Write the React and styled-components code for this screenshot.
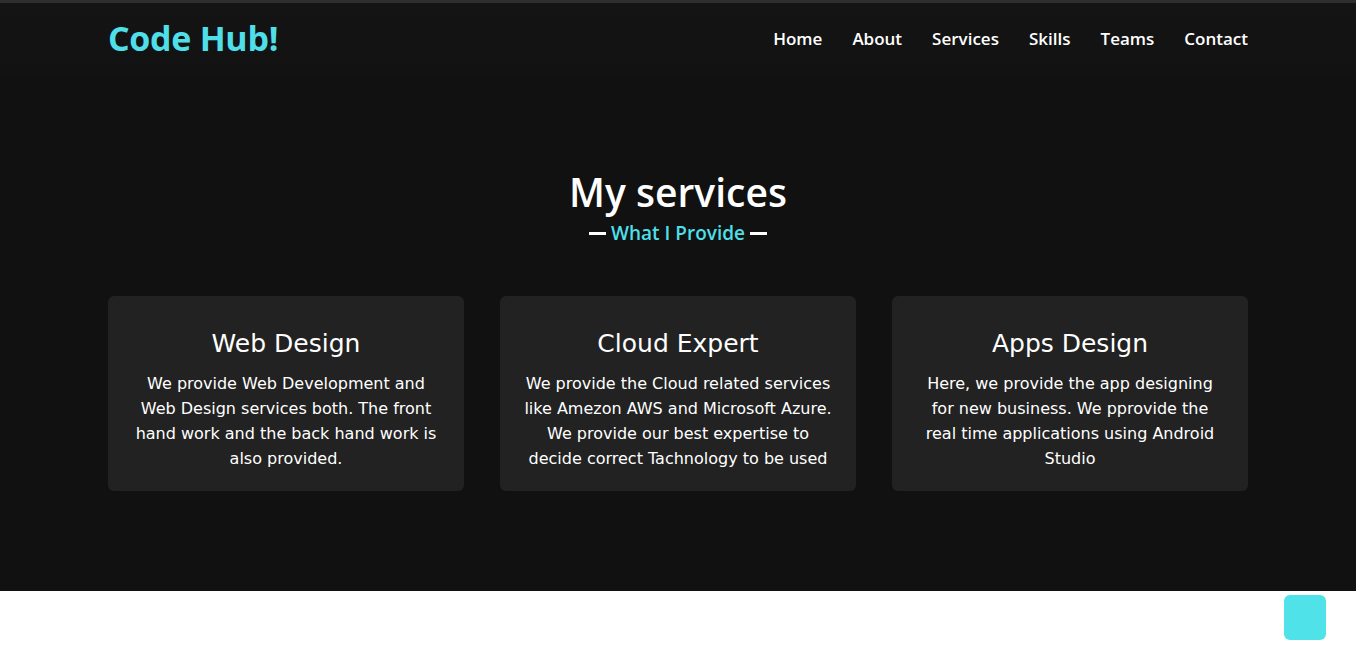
import React from 'react';
import styled, { createGlobalStyle } from 'styled-components';

const GlobalStyle = createGlobalStyle`
  * {
    margin: 0;
    padding: 0;
    box-sizing: border-box;
  }
  body {
    background: #fff;
    font-family: "Open Sans", sans-serif;
  }
`;

const TopLine = styled.div`
  height: 3px;
  background: #2e2e2e;
`;

const Navbar = styled.nav`
  height: 72px;
  background: linear-gradient(180deg, #151415 0%, #121212 100%);
`;

const Container = styled.div`
  max-width: 1140px;
  margin: 0 auto;
  height: 100%;
`;

const NavInner = styled(Container)`
  display: flex;
  align-items: center;
  justify-content: space-between;
`;

const Logo = styled.a`
  font-family: "Open Sans", sans-serif;
  font-size: 34px;
  font-weight: 700;
  color: #4fdfe9;
  letter-spacing: -0.3px;
  text-decoration: none;
  margin-top: -2px;
`;

const Menu = styled.ul`
  list-style: none;
  display: flex;
  gap: 30px;
  margin-top: -2px;
`;

const MenuLink = styled.a`
  font-family: "Open Sans", sans-serif;
  font-size: 17px;
  font-weight: 600;
  color: #fff;
  text-decoration: none;
`;

const Services = styled.section`
  background: #111111;
  padding: 94px 0 100px;
`;

const Title = styled.h2`
  font-family: "Open Sans", sans-serif;
  font-size: 39px;
  font-weight: 600;
  color: #fff;
  text-align: center;
  line-height: 46px;
`;

const Subtitle = styled.div`
  display: flex;
  justify-content: center;
  align-items: center;
  gap: 5px;
  margin-top: 6px;
  font-family: "Open Sans", sans-serif;
  font-size: 19px;
  font-weight: 600;
  color: #4fdfe9;
  line-height: 24px;
  &::before,
  &::after {
    content: "";
    width: 17px;
    height: 3px;
    background: #fff;
  }
`;

const Cards = styled(Container)`
  display: grid;
  grid-template-columns: repeat(3, 1fr);
  gap: 36px;
  margin-top: 51px;
`;

const Card = styled.div`
  background: #222222;
  border-radius: 6px;
  padding: 30px 20px 24px;
  text-align: center;
  height: 195px;
  color: #fff;
`;

const CardTitle = styled.h3`
  font-family: "DejaVu Sans", sans-serif;
  font-size: 25px;
  font-weight: 400;
  line-height: 36px;
  margin-bottom: 9px;
`;

const CardText = styled.p`
  font-family: "DejaVu Sans", sans-serif;
  font-size: 16px;
  line-height: 25px;
  padding: 0 ${p => p.$pad || 0}px;
`;

const Blank = styled.div`
  height: 76px;
  background: #fff;
`;

const ScrollTop = styled.button`
  position: fixed;
  right: 30px;
  bottom: 27px;
  width: 42px;
  height: 45px;
  border: none;
  border-radius: 6px;
  background: #4fe3e9;
`;

const items = [
  { title: 'Web Design', pad: 4, text: 'We provide Web Development and Web Design services both. The front hand work and the back hand work is also provided.' },
  { title: 'Cloud Expert', pad: 0, text: 'We provide the Cloud related services like Amezon AWS and Microsoft Azure. We provide our best expertise to decide correct Tachnology to be used' },
  { title: 'Apps Design', pad: 8, text: 'Here, we provide the app designing for new business. We pprovide the real time applications using Android Studio' },
];

const links = ['Home', 'About', 'Services', 'Skills', 'Teams', 'Contact'];

export default function App() {
  return (
    <>
      <GlobalStyle />
      <TopLine />
      <Navbar>
        <NavInner>
          <Logo href="#">Code Hub!</Logo>
          <Menu>
            {links.map(l => (
              <li key={l}><MenuLink href="#">{l}</MenuLink></li>
            ))}
          </Menu>
        </NavInner>
      </Navbar>
      <Services>
        <Title>My services</Title>
        <Subtitle>What I Provide</Subtitle>
        <Cards>
          {items.map(it => (
            <Card key={it.title}>
              <CardTitle>{it.title}</CardTitle>
              <CardText $pad={it.pad}>{it.text}</CardText>
            </Card>
          ))}
        </Cards>
      </Services>
      <Blank />
      <ScrollTop aria-label="Scroll to top" />
    </>
  );
}
